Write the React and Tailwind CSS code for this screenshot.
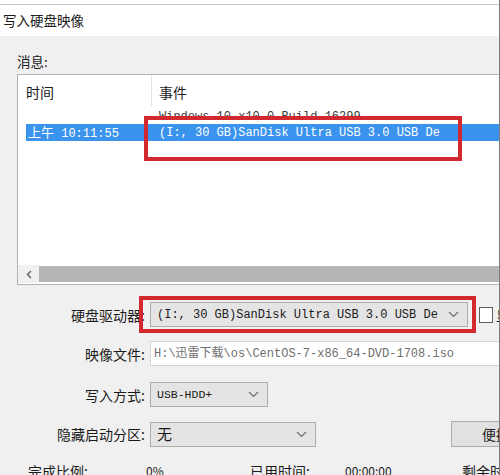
import React from 'react';

function Chevron({ className = '' }) {
  return (
    <svg width="11" height="7" viewBox="0 0 11 7" className={className}>
      <path d="M1 1l4.5 4.5L10 1" fill="none" stroke="#6e6e6e" strokeWidth="1.2" />
    </svg>
  );
}

function Combo({ width, children }) {
  return (
    <div
      className="flex items-center justify-between h-[25px] bg-[#e4e4e4] border border-[#adadad] pl-[6px] pr-[8px] shrink-0"
      style={{ width }}
    >
      <span className="whitespace-nowrap leading-normal">{children}</span>
      <Chevron className="shrink-0 ml-2" />
    </div>
  );
}

const mono = "font-['Liberation_Mono','Noto_Sans_CJK_SC',monospace]";
const label = 'w-[146px] shrink-0 text-right pr-[1px] whitespace-nowrap';

export default function App() {
  return (
    <div className="w-[500px] h-[475px] overflow-hidden bg-[#f0f0f0] border-r border-[#7d7d7d] font-['Noto_Sans_CJK_SC',sans-serif] text-[#1b1b1b] text-[14px] leading-none">
      <div className="h-[4px] bg-white border-b border-[#c9c9c9] box-content" />
      <div className="h-[31px] bg-white pl-[3px] pt-[9px] text-[13.5px]">写入硬盘映像</div>

      <div className="pl-[17px] pt-[19px]">
        <div className="h-[19px] text-[13.5px]">消息:</div>

        <div className="relative h-[211px] bg-white border border-[#b3b3b3] border-r-0 flex flex-col">
          <div className="flex h-[31px] shrink-0">
            <div className="w-[134px] border-r border-[#e3e3e3] pl-[8px] pt-[10px]">时间</div>
            <div className="pl-[7px] pt-[10px]">事件</div>
          </div>
          <div className={`flex h-[18px] items-end text-[12px] text-[#3a3a3a] ${mono}`}>
            <div className="w-[135px]" />
            <div className="pl-[6px] pb-[1px]">Windows 10 x10.0 Build 16299</div>
          </div>
          <div className="flex items-center h-[17px] ml-[8px] bg-[#3a93ed] text-white text-[12px]">
            <div className={`w-[127px] pl-[2px] ${mono}`}>
              <span className="font-['Noto_Sans_CJK_SC',sans-serif] text-[13px]">上午</span> 10:11:55
            </div>
            <div className={`pl-[6px] ${mono}`}>(I:, 30 GB)SanDisk Ultra USB 3.0 USB De</div>
          </div>
          <div className="flex-1" />
          <div className="flex h-[18px] items-stretch mb-[1px]">
            <div className="w-[21px] bg-[#f0f0f0] flex items-center justify-center">
              <svg width="6" height="9" viewBox="0 0 6 9">
                <path d="M5 1L1.5 4.5 5 8" fill="none" stroke="#606060" strokeWidth="1.4" />
              </svg>
            </div>
            <div className="flex-1 bg-[#b5b5b5] my-[1px]" />
          </div>

          <div className="absolute left-[126px] top-[41px] w-[318px] h-[45px] border-[4px] border-[#d42830]" />
        </div>
      </div>

      <div className="mt-[17px] flex flex-col gap-[14px]">
        <div className="relative flex items-center h-[25px]">
          <div className={label}>硬盘驱动器:</div>
          <div className={`ml-[4px] shrink-0 text-[12px] ${mono}`}>
            <Combo width={318}>(I:, 30 GB)SanDisk Ultra USB 3.0 USB De</Combo>
          </div>
          <div className="ml-[11px] w-[14px] h-[16px] bg-white border border-[#5f5f5f] shrink-0" />
          <div className="ml-[3px] whitespace-nowrap shrink-0">显示</div>
          <div className="absolute left-[139px] top-[-6px] w-[337px] h-[37px] border-[4px] border-[#d42830]" />
        </div>

        <div className="flex items-center h-[25px]">
          <div className={label}>映像文件:</div>
          <div className={`ml-[4px] flex-1 h-[25px] bg-white border border-[#d4d4d4] border-r-0 flex items-center pl-[3px] text-[12px] text-[#6f6f6f] whitespace-nowrap overflow-hidden ${mono}`}>
            H:\迅雷下载\os\CentOS-7-x86_64-DVD-1708.iso
          </div>
        </div>

        <div className="flex items-center h-[25px] mt-[2px]">
          <div className={label}>写入方式:</div>
          <div className={`ml-[4px] shrink-0 text-[11.5px] ${mono}`}>
            <Combo width={118}>USB-HDD+</Combo>
          </div>
        </div>

        <div className="flex items-center h-[26px]">
          <div className={label}>隐藏启动分区:</div>
          <div className="ml-[4px] shrink-0 text-[15px]">
            <Combo width={166}>无</Combo>
          </div>
          <div className="ml-[135px] h-[26px] w-[80px] shrink-0 bg-[#e1e1e1] border border-[#adadad] flex items-center pl-[30px] whitespace-nowrap">
            便携启动
          </div>
        </div>

        <div className="flex items-center h-[16px] mt-[2px] whitespace-nowrap">
          <div className="w-[146px] shrink-0 pl-[28px]">完成比例:</div>
          <div className="w-[104px] shrink-0 text-[12px]">0%</div>
          <div className="w-[95px] shrink-0">已用时间:</div>
          <div className="w-[117px] shrink-0 text-[12px]">00:00:00</div>
          <div className="shrink-0">剩余时间:</div>
        </div>
      </div>
    </div>
  );
}
